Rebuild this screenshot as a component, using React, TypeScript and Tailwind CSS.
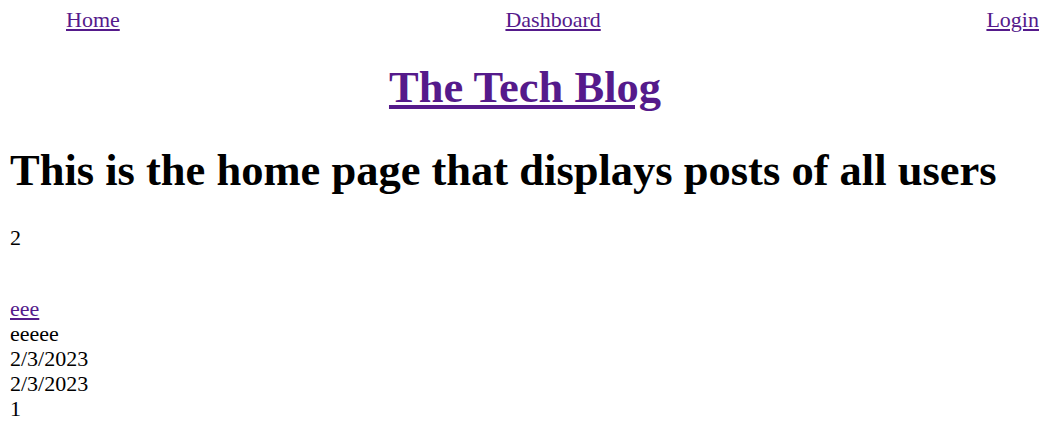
export default function App() {
  const post = {
    title: "eee",
    content: "eeeee",
    created: "2/3/2023",
    updated: "2/3/2023",
    userId: 1,
  };

  return (
    <div className="min-h-screen bg-white text-black font-['Liberation_Serif',serif] text-[22px] leading-[25px]">
      <nav className="flex justify-between pl-[66px] pr-[7px] pt-[7px]">
        <a href="#" className="text-[#551a8b] underline">Home</a>
        <a href="#" className="text-[#551a8b] underline">Dashboard</a>
        <a href="#" className="text-[#551a8b] underline">Login</a>
      </nav>

      <h1 className="mt-[30px] pl-[4px] text-center text-[44.5px] leading-[50px] font-bold">
        <a href="#" className="text-[#551a8b] underline">The Tech Blog</a>
      </h1>

      <main className="px-[10px]">
        <h1 className="mt-[33px] text-[44.5px] leading-[50px] font-bold">
          This is the home page that displays posts of all users
        </h1>
        <p className="mt-[30px]">2</p>

        <div className="mt-[46px]">
          <a href="#" className="text-[#551a8b] underline">{post.title}</a>
          <div>{post.content}</div>
          <div>{post.created}</div>
          <div>{post.updated}</div>
          <div>{post.userId}</div>
        </div>
      </main>
    </div>
  );
}
